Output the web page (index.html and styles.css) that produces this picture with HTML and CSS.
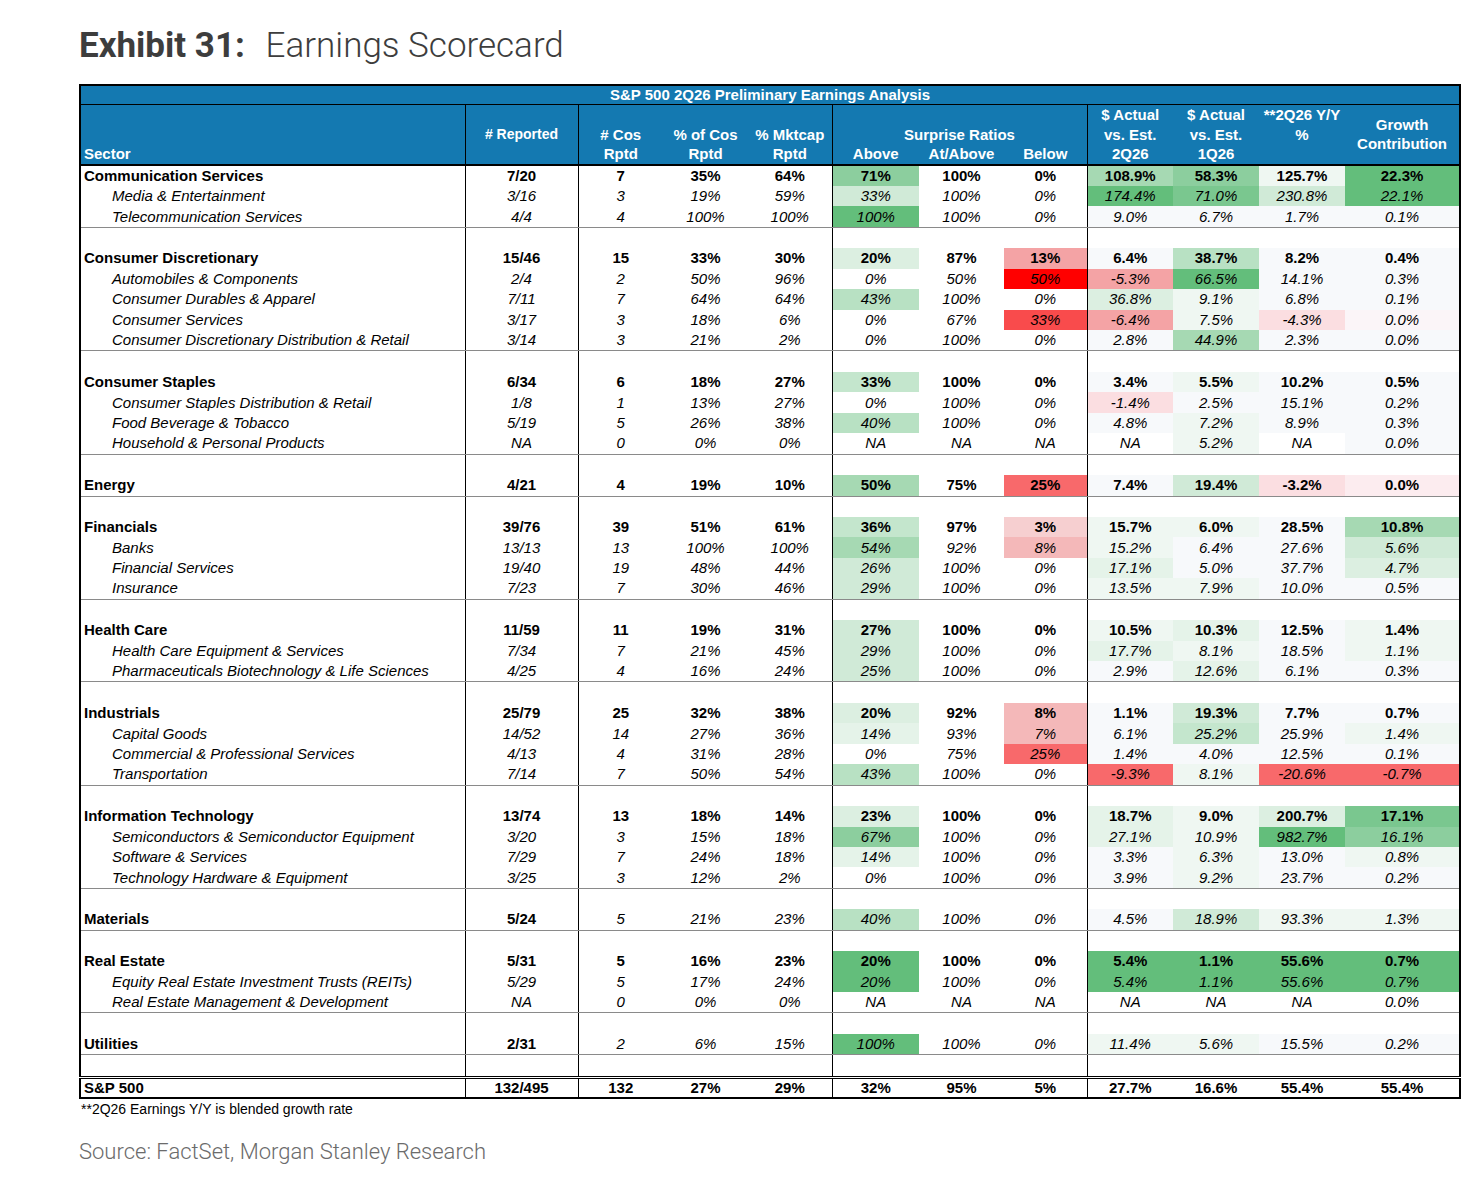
FILE: index.html
```html
<!DOCTYPE html>
<html lang="en">

<head>
    <meta charset="utf-8">
    <title>Exhibit 31: Earnings Scorecard</title>
    <link rel="stylesheet" href="styles.css">
</head>

<body>
    <div class="page">
        <h1 class="title">Exhibit 31: <span class="name">Earnings Scorecard</span></h1>

        <table class="score">
            <colgroup>
                <col style="width:385px">
                <col style="width:113px">
                <col style="width:85px">
                <col style="width:85px">
                <col style="width:84px">
                <col style="width:87px">
                <col style="width:85px">
                <col style="width:83px">
                <col style="width:86px">
                <col style="width:86px">
                <col style="width:86px">
                <col style="width:115px">
            </colgroup>
            <thead>
                <tr class="cap">
                    <th colspan="12">S&amp;P 500 2Q26 Preliminary Earnings Analysis</th>
                </tr>
                <tr class="hd1">
                    <th rowspan="2" class="sector">Sector</th>
                    <th rowspan="2" class="div mid small">#&nbsp;Reported</th>
                    <th rowspan="2" class="div bot"># Cos<br>Rptd</th>
                    <th rowspan="2" class="bot">% of Cos<br>Rptd</th>
                    <th rowspan="2" class="bot">% Mktcap<br>Rptd</th>
                    <th colspan="3" class="div bot">Surprise Ratios</th>
                    <th rowspan="2" class="div bot">$ Actual<br>vs. Est.<br>2Q26</th>
                    <th rowspan="2" class="bot">$ Actual<br>vs. Est.<br>1Q26</th>
                    <th rowspan="2" class="top">**2Q26 Y/Y<br>%</th>
                    <th rowspan="2" class="mid tight">Growth<br>Contribution</th>
                </tr>
                <tr class="hd2">
                    <th class="div">Above</th>
                    <th>At/Above</th>
                    <th>Below</th>
                </tr>
            </thead>
            <tbody>
                <tr class="sec">
                    <td>Communication Services</td><td>7/20</td><td>7</td><td>35%</td><td>64%</td>
                    <td class="g8">71%</td><td>100%</td><td>0%</td>
                    <td class="g7">108.9%</td><td class="g8">58.3%</td><td class="g1">125.7%</td><td class="gx">22.3%</td>
                </tr>
                <tr class="sub">
                    <td>Media &amp; Entertainment</td><td>3/16</td><td>3</td><td>19%</td><td>59%</td>
                    <td class="g4">33%</td><td>100%</td><td>0%</td>
                    <td class="gx">174.4%</td><td class="g9">71.0%</td><td class="g4">230.8%</td><td class="gx">22.1%</td>
                </tr>
                <tr class="sub end">
                    <td>Telecommunication Services</td><td>4/4</td><td>4</td><td>100%</td><td>100%</td>
                    <td class="gx">100%</td><td>100%</td><td>0%</td>
                    <td class="g0">9.0%</td><td class="g0">6.7%</td><td class="g0">1.7%</td><td class="g0">0.1%</td>
                </tr>
                <tr class="blank"><td></td><td></td><td></td><td></td><td></td><td></td><td></td><td></td><td></td><td></td><td></td><td></td></tr>

                <tr class="sec">
                    <td>Consumer Discretionary</td><td>15/46</td><td>15</td><td>33%</td><td>30%</td>
                    <td class="g3">20%</td><td>87%</td><td class="r5">13%</td>
                    <td class="g0">6.4%</td><td class="g6">38.7%</td><td class="g0">8.2%</td><td class="g0">0.4%</td>
                </tr>
                <tr class="sub">
                    <td>Automobiles &amp; Components</td><td>2/4</td><td>2</td><td>50%</td><td>96%</td>
                    <td>0%</td><td>50%</td><td class="r8">50%</td>
                    <td class="r5">-5.3%</td><td class="gx">66.5%</td><td class="g0">14.1%</td><td class="g0">0.3%</td>
                </tr>
                <tr class="sub">
                    <td>Consumer Durables &amp; Apparel</td><td>7/11</td><td>7</td><td>64%</td><td>64%</td>
                    <td class="g6">43%</td><td>100%</td><td>0%</td>
                    <td class="g3">36.8%</td><td class="g1">9.1%</td><td class="g0">6.8%</td><td class="g0">0.1%</td>
                </tr>
                <tr class="sub">
                    <td>Consumer Services</td><td>3/17</td><td>3</td><td>18%</td><td>6%</td>
                    <td>0%</td><td>67%</td><td class="r7">33%</td>
                    <td class="r5">-6.4%</td><td class="g1">7.5%</td><td class="r2">-4.3%</td><td class="r0">0.0%</td>
                </tr>
                <tr class="sub end">
                    <td>Consumer Discretionary Distribution &amp; Retail</td><td>3/14</td><td>3</td><td>21%</td><td>2%</td>
                    <td>0%</td><td>100%</td><td>0%</td>
                    <td class="g0">2.8%</td><td class="g7">44.9%</td><td class="g0">2.3%</td><td class="g0">0.0%</td>
                </tr>
                <tr class="blank"><td></td><td></td><td></td><td></td><td></td><td></td><td></td><td></td><td></td><td></td><td></td><td></td></tr>

                <tr class="sec">
                    <td>Consumer Staples</td><td>6/34</td><td>6</td><td>18%</td><td>27%</td>
                    <td class="g5">33%</td><td>100%</td><td>0%</td>
                    <td class="g0">3.4%</td><td class="g1">5.5%</td><td class="g0">10.2%</td><td class="g0">0.5%</td>
                </tr>
                <tr class="sub">
                    <td>Consumer Staples Distribution &amp; Retail</td><td>1/8</td><td>1</td><td>13%</td><td>27%</td>
                    <td>0%</td><td>100%</td><td>0%</td>
                    <td class="r2">-1.4%</td><td class="g0">2.5%</td><td class="g0">15.1%</td><td class="g0">0.2%</td>
                </tr>
                <tr class="sub">
                    <td>Food Beverage &amp; Tobacco</td><td>5/19</td><td>5</td><td>26%</td><td>38%</td>
                    <td class="g6">40%</td><td>100%</td><td>0%</td>
                    <td class="g0">4.8%</td><td class="g1">7.2%</td><td class="g0">8.9%</td><td class="g0">0.3%</td>
                </tr>
                <tr class="sub end">
                    <td>Household &amp; Personal Products</td><td>NA</td><td>0</td><td>0%</td><td>0%</td>
                    <td>NA</td><td>NA</td><td>NA</td>
                    <td>NA</td><td class="g1">5.2%</td><td>NA</td><td class="g0">0.0%</td>
                </tr>
                <tr class="blank"><td></td><td></td><td></td><td></td><td></td><td></td><td></td><td></td><td></td><td></td><td></td><td></td></tr>

                <tr class="sec end">
                    <td>Energy</td><td>4/21</td><td>4</td><td>19%</td><td>10%</td>
                    <td class="g7">50%</td><td>75%</td><td class="r6">25%</td>
                    <td class="g0">7.4%</td><td class="g4">19.4%</td><td class="r2">-3.2%</td><td class="r1">0.0%</td>
                </tr>
                <tr class="blank"><td></td><td></td><td></td><td></td><td></td><td></td><td></td><td></td><td></td><td></td><td></td><td></td></tr>

                <tr class="sec">
                    <td>Financials</td><td>39/76</td><td>39</td><td>51%</td><td>61%</td>
                    <td class="g5">36%</td><td>97%</td><td class="r3">3%</td>
                    <td class="g1">15.7%</td><td class="g1">6.0%</td><td class="g0">28.5%</td><td class="g7">10.8%</td>
                </tr>
                <tr class="sub">
                    <td>Banks</td><td>13/13</td><td>13</td><td>100%</td><td>100%</td>
                    <td class="g7">54%</td><td>92%</td><td class="r4">8%</td>
                    <td class="g1">15.2%</td><td class="g0">6.4%</td><td class="g0">27.6%</td><td class="g4">5.6%</td>
                </tr>
                <tr class="sub">
                    <td>Financial Services</td><td>19/40</td><td>19</td><td>48%</td><td>44%</td>
                    <td class="g4">26%</td><td>100%</td><td>0%</td>
                    <td class="g2">17.1%</td><td class="g0">5.0%</td><td class="g0">37.7%</td><td class="g3">4.7%</td>
                </tr>
                <tr class="sub end">
                    <td>Insurance</td><td>7/23</td><td>7</td><td>30%</td><td>46%</td>
                    <td class="g4">29%</td><td>100%</td><td>0%</td>
                    <td class="g1">13.5%</td><td class="g1">7.9%</td><td class="g0">10.0%</td><td class="g0">0.5%</td>
                </tr>
                <tr class="blank"><td></td><td></td><td></td><td></td><td></td><td></td><td></td><td></td><td></td><td></td><td></td><td></td></tr>

                <tr class="sec">
                    <td>Health Care</td><td>11/59</td><td>11</td><td>19%</td><td>31%</td>
                    <td class="g4">27%</td><td>100%</td><td>0%</td>
                    <td class="g1">10.5%</td><td class="g2">10.3%</td><td class="g0">12.5%</td><td class="g1">1.4%</td>
                </tr>
                <tr class="sub">
                    <td>Health Care Equipment &amp; Services</td><td>7/34</td><td>7</td><td>21%</td><td>45%</td>
                    <td class="g4">29%</td><td>100%</td><td>0%</td>
                    <td class="g2">17.7%</td><td class="g1">8.1%</td><td class="g0">18.5%</td><td class="g1">1.1%</td>
                </tr>
                <tr class="sub end">
                    <td>Pharmaceuticals Biotechnology &amp; Life Sciences</td><td>4/25</td><td>4</td><td>16%</td><td>24%</td>
                    <td class="g4">25%</td><td>100%</td><td>0%</td>
                    <td class="g0">2.9%</td><td class="g2">12.6%</td><td class="g0">6.1%</td><td class="g0">0.3%</td>
                </tr>
                <tr class="blank"><td></td><td></td><td></td><td></td><td></td><td></td><td></td><td></td><td></td><td></td><td></td><td></td></tr>

                <tr class="sec">
                    <td>Industrials</td><td>25/79</td><td>25</td><td>32%</td><td>38%</td>
                    <td class="g3">20%</td><td>92%</td><td class="r4">8%</td>
                    <td class="g0">1.1%</td><td class="g4">19.3%</td><td class="g0">7.7%</td><td class="g0">0.7%</td>
                </tr>
                <tr class="sub">
                    <td>Capital Goods</td><td>14/52</td><td>14</td><td>27%</td><td>36%</td>
                    <td class="g2">14%</td><td>93%</td><td class="r4">7%</td>
                    <td class="g0">6.1%</td><td class="g5">25.2%</td><td class="g0">25.9%</td><td class="g1">1.4%</td>
                </tr>
                <tr class="sub">
                    <td>Commercial &amp; Professional Services</td><td>4/13</td><td>4</td><td>31%</td><td>28%</td>
                    <td>0%</td><td>75%</td><td class="r6">25%</td>
                    <td class="g0">1.4%</td><td class="g0">4.0%</td><td class="g0">12.5%</td><td class="g0">0.1%</td>
                </tr>
                <tr class="sub end">
                    <td>Transportation</td><td>7/14</td><td>7</td><td>50%</td><td>54%</td>
                    <td class="g6">43%</td><td>100%</td><td>0%</td>
                    <td class="r6">-9.3%</td><td class="g1">8.1%</td><td class="r6">-20.6%</td><td class="r6">-0.7%</td>
                </tr>
                <tr class="blank"><td></td><td></td><td></td><td></td><td></td><td></td><td></td><td></td><td></td><td></td><td></td><td></td></tr>

                <tr class="sec">
                    <td>Information Technology</td><td>13/74</td><td>13</td><td>18%</td><td>14%</td>
                    <td class="g3">23%</td><td>100%</td><td>0%</td>
                    <td class="g2">18.7%</td><td class="g1">9.0%</td><td class="g3">200.7%</td><td class="g9">17.1%</td>
                </tr>
                <tr class="sub">
                    <td>Semiconductors &amp; Semiconductor Equipment</td><td>3/20</td><td>3</td><td>15%</td><td>18%</td>
                    <td class="g8">67%</td><td>100%</td><td>0%</td>
                    <td class="g2">27.1%</td><td class="g1">10.9%</td><td class="gx">982.7%</td><td class="g8">16.1%</td>
                </tr>
                <tr class="sub">
                    <td>Software &amp; Services</td><td>7/29</td><td>7</td><td>24%</td><td>18%</td>
                    <td class="g2">14%</td><td>100%</td><td>0%</td>
                    <td class="g0">3.3%</td><td class="g1">6.3%</td><td class="g0">13.0%</td><td class="g1">0.8%</td>
                </tr>
                <tr class="sub end">
                    <td>Technology Hardware &amp; Equipment</td><td>3/25</td><td>3</td><td>12%</td><td>2%</td>
                    <td>0%</td><td>100%</td><td>0%</td>
                    <td class="g0">3.9%</td><td class="g1">9.2%</td><td class="g0">23.7%</td><td class="g0">0.2%</td>
                </tr>
                <tr class="blank"><td></td><td></td><td></td><td></td><td></td><td></td><td></td><td></td><td></td><td></td><td></td><td></td></tr>

                <tr class="lite end">
                    <td>Materials</td><td>5/24</td><td>5</td><td>21%</td><td>23%</td>
                    <td class="g6">40%</td><td>100%</td><td>0%</td>
                    <td class="g0">4.5%</td><td class="g4">18.9%</td><td class="g1">93.3%</td><td class="g1">1.3%</td>
                </tr>
                <tr class="blank"><td></td><td></td><td></td><td></td><td></td><td></td><td></td><td></td><td></td><td></td><td></td><td></td></tr>

                <tr class="sec">
                    <td>Real Estate</td><td>5/31</td><td>5</td><td>16%</td><td>23%</td>
                    <td class="gx">20%</td><td>100%</td><td>0%</td>
                    <td class="gx">5.4%</td><td class="gx">1.1%</td><td class="gx">55.6%</td><td class="gx">0.7%</td>
                </tr>
                <tr class="sub">
                    <td>Equity Real Estate Investment Trusts (REITs)</td><td>5/29</td><td>5</td><td>17%</td><td>24%</td>
                    <td class="gx">20%</td><td>100%</td><td>0%</td>
                    <td class="gx">5.4%</td><td class="gx">1.1%</td><td class="gx">55.6%</td><td class="gx">0.7%</td>
                </tr>
                <tr class="sub end">
                    <td>Real Estate Management &amp; Development</td><td>NA</td><td>0</td><td>0%</td><td>0%</td>
                    <td>NA</td><td>NA</td><td>NA</td>
                    <td>NA</td><td>NA</td><td>NA</td><td>0.0%</td>
                </tr>
                <tr class="blank"><td></td><td></td><td></td><td></td><td></td><td></td><td></td><td></td><td></td><td></td><td></td><td></td></tr>

                <tr class="lite end">
                    <td>Utilities</td><td>2/31</td><td>2</td><td>6%</td><td>15%</td>
                    <td class="gx">100%</td><td>100%</td><td>0%</td>
                    <td class="g1">11.4%</td><td class="g1">5.6%</td><td class="g0">15.5%</td><td class="g0">0.2%</td>
                </tr>
                <tr class="blank"><td></td><td></td><td></td><td></td><td></td><td></td><td></td><td></td><td></td><td></td><td></td><td></td></tr>

                <tr class="sec total">
                    <td>S&amp;P 500</td><td>132/495</td><td>132</td><td>27%</td><td>29%</td>
                    <td>32%</td><td>95%</td><td>5%</td>
                    <td>27.7%</td><td>16.6%</td><td>55.4%</td><td>55.4%</td>
                </tr>
            </tbody>
        </table>

        <p class="note">**2Q26 Earnings Y/Y is blended growth rate</p>
        <p class="source">Source: FactSet, Morgan Stanley Research</p>
    </div>
</body>

</html>
```

FILE: styles.css
```css
body {
    margin: 0;
    background: #fff;
    font-family: "Liberation Sans", Arial, sans-serif;
    color: #000;
}

.page {
    padding: 26px 0 40px 79px;
}

.title {
    margin: 0;
    font-family: Roboto, "Liberation Sans", sans-serif;
    font-size: 35px;
    line-height: 40px;
    font-weight: 700;
    color: #3d3d3d;
}

.title .name {
    font-weight: 300;
    margin-left: 12px;
}

/* table */

.score {
    margin-top: 18px;
    border-collapse: collapse;
    table-layout: fixed;
    width: 1380px;
    border: 2px solid #000;
    font-size: 15px;
}

.score th {
    background: #1479b1;
    color: #fff;
    font-weight: bold;
    padding: 0 2px;
    line-height: 19.5px;
    text-align: center;
}

.cap th {
    height: 18px;
    line-height: 18px;
    border-bottom: 1px solid #000;
}

.hd1 th {
    height: 39px;
}

.hd2 th {
    height: 19.5px;
    vertical-align: bottom;
    border-bottom: 2px solid #000;
}

.hd1 th[rowspan] {
    border-bottom: 2px solid #000;
}

.score th.sector {
    text-align: left;
    vertical-align: bottom;
    padding-left: 3px;
}

.score th.div {
    border-left: 1px solid #000;
}

.score th.bot {
    vertical-align: bottom;
}

.score th.mid {
    vertical-align: middle;
}

.score th.top {
    vertical-align: top;
}

.score th.small {
    font-size: 14px;
}

.score th.tight {
    line-height: 19px;
}

.score td {
    height: 20.45px;
    padding: 0 2px;
    line-height: 18px;
    text-align: center;
    vertical-align: middle;
    white-space: nowrap;
}

.score td:first-child {
    text-align: left;
    padding-left: 3px;
}

.score td:nth-child(2),
.score td:nth-child(3),
.score td:nth-child(6),
.score td:nth-child(9) {
    border-left: 1px solid #000;
}

.sec td {
    font-weight: bold;
}

.sub td {
    font-style: italic;
}

.sub td:first-child {
    padding-left: 31px;
}

.lite td {
    font-style: italic;
}

.lite td:nth-child(-n+2) {
    font-weight: bold;
    font-style: normal;
}

.end td {
    border-bottom: 1px solid #8a8a8a;
}

.total td {
    border-top: 3px double #000;
    height: 18px;
}

/* heatmap shades */

.g0 { background: #f7f9fb; }
.g1 { background: #eff7f2; }
.g2 { background: #e5f3e9; }
.g3 { background: #dcefe1; }
.g4 { background: #d0ead7; }
.g5 { background: #c4e6cd; }
.g6 { background: #b8e1c3; }
.g7 { background: #a6d9b3; }
.g8 { background: #8cce9e; }
.g9 { background: #7ac78f; }
.gx { background: #63be7b; }

.r0 { background: #fbf5f8; }
.r1 { background: #fcecef; }
.r2 { background: #fbdee1; }
.r3 { background: #f6cfd0; }
.r4 { background: #f4b8b9; }
.r5 { background: #f4a3a5; }
.r6 { background: #f8696b; }
.r7 { background: #f94b4c; }
.r8 { background: #ff0000; }

.note {
    margin: 2px 0 0 2px;
    font-size: 14px;
    line-height: 16px;
}

.source {
    margin: 22px 0 0;
    font-family: Roboto, "Liberation Sans", sans-serif;
    font-weight: 300;
    font-size: 22px;
    line-height: 26px;
    color: #6b6b6b;
}
```
